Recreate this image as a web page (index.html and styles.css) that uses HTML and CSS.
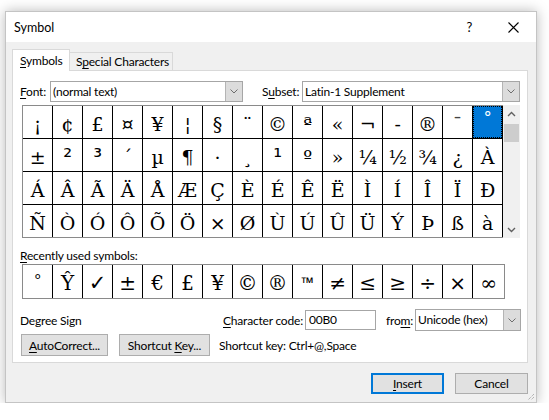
FILE: index.html
```html
<!DOCTYPE html>
<html>
<head>
<meta charset="utf-8">
<link rel="stylesheet" href="styles.css">
</head>
<body>
<div class="dialog">
  <div class="titlebar">
    <span class="title">Symbol</span>
    <span class="help">?</span>
    <svg class="close" width="11" height="11" viewBox="0 0 11 11"><path d="M0.5 0.5 L10.5 10.5 M10.5 0.5 L0.5 10.5" stroke="#000" stroke-width="1.1" fill="none"/></svg>
  </div>
  <div class="content">
    <div class="tabs">
      <div class="tab active"><u>S</u>ymbols</div>
      <div class="tab">S<u>p</u>ecial Characters</div>
    </div>
    <div class="panel">
      <div class="font-row">
        <span class="lbl font-lbl"><u>F</u>ont:</span>
        <div class="combo font-combo"><span class="combo-text">(normal text)</span><span class="combo-btn"><svg width="8" height="5" viewBox="0 0 8 5"><path d="M0.5 0.5 L4 4 L7.5 0.5" stroke="#6d6d6d" fill="none"/></svg></span></div>
        <span class="lbl subset-lbl">S<u>u</u>bset:</span>
        <div class="combo subset-combo"><span class="combo-text">Latin-1 Supplement</span><span class="combo-btn"><svg width="8" height="5" viewBox="0 0 8 5"><path d="M0.5 0.5 L4 4 L7.5 0.5" stroke="#6d6d6d" fill="none"/></svg></span></div>
      </div>
      <div class="charmap">
        <div class="chargrid">
          <span class="cell">¡</span><span class="cell">¢</span><span class="cell">£</span><span class="cell">¤</span><span class="cell">¥</span><span class="cell">¦</span><span class="cell">§</span><span class="cell">¨</span><span class="cell">©</span><span class="cell">ª</span><span class="cell">«</span><span class="cell">¬</span><span class="cell">-</span><span class="cell">®</span><span class="cell macron">¯</span><span class="cell sel">°</span>
          <span class="cell">±</span><span class="cell sup">²</span><span class="cell sup">³</span><span class="cell">´</span><span class="cell">µ</span><span class="cell">¶</span><span class="cell">·</span><span class="cell">¸</span><span class="cell sup">¹</span><span class="cell">º</span><span class="cell">»</span><span class="cell">¼</span><span class="cell">½</span><span class="cell">¾</span><span class="cell">¿</span><span class="cell">À</span>
          <span class="cell">Á</span><span class="cell">Â</span><span class="cell">Ã</span><span class="cell">Ä</span><span class="cell">Å</span><span class="cell">Æ</span><span class="cell">Ç</span><span class="cell">È</span><span class="cell">É</span><span class="cell">Ê</span><span class="cell">Ë</span><span class="cell">Ì</span><span class="cell">Í</span><span class="cell">Î</span><span class="cell">Ï</span><span class="cell">Ð</span>
          <span class="cell">Ñ</span><span class="cell">Ò</span><span class="cell">Ó</span><span class="cell">Ô</span><span class="cell">Õ</span><span class="cell">Ö</span><span class="cell">×</span><span class="cell">Ø</span><span class="cell">Ù</span><span class="cell">Ú</span><span class="cell">Û</span><span class="cell">Ü</span><span class="cell">Ý</span><span class="cell">Þ</span><span class="cell">ß</span><span class="cell">à</span>
        </div>
        <div class="scrollbar">
          <span class="sb-arrow"><svg width="9" height="6" viewBox="0 0 9 6"><path d="M1 5 L4.5 1.5 L8 5" stroke="#606060" stroke-width="1.4" fill="none"/></svg></span>
          <span class="sb-thumb"></span>
          <span class="sb-space"></span>
          <span class="sb-arrow"><svg width="9" height="6" viewBox="0 0 9 6"><path d="M1 1 L4.5 4.5 L8 1" stroke="#606060" stroke-width="1.4" fill="none"/></svg></span>
        </div>
      </div>
      <div class="recent-lbl"><u>R</u>ecently used symbols:</div>
      <div class="recent">
        <span class="rcell deg">°</span><span class="rcell">Ŷ</span><span class="rcell check">✓</span><span class="rcell">±</span><span class="rcell">€</span><span class="rcell">£</span><span class="rcell">¥</span><span class="rcell">©</span><span class="rcell">®</span><span class="rcell tm">™</span><span class="rcell">≠</span><span class="rcell">≤</span><span class="rcell">≥</span><span class="rcell">÷</span><span class="rcell sans">×</span><span class="rcell">∞</span>
      </div>
      <div class="code-row">
        <span class="char-name">Degree Sign</span>
        <span class="lbl code-lbl"><u>C</u>haracter code:</span>
        <div class="textbox">00B0</div>
        <span class="lbl from-lbl">fro<u>m</u>:</span>
        <div class="combo from-combo"><span class="combo-text">Unicode (hex)</span><span class="combo-btn"><svg width="8" height="5" viewBox="0 0 8 5"><path d="M0.5 0.5 L4 4 L7.5 0.5" stroke="#6d6d6d" fill="none"/></svg></span></div>
      </div>
      <div class="btn-row">
        <button class="btn autocorrect"><u>A</u>utoCorrect...</button>
        <button class="btn shortcut">Shortcut <u>K</u>ey...</button>
        <span class="shortcut-text">Shortcut key: Ctrl+@,Space</span>
      </div>
    </div>
    <div class="footer">
      <button class="btn default"><u>I</u>nsert</button>
      <button class="btn">Cancel</button>
    </div>
  </div>
  <svg class="grip" width="10" height="10" viewBox="0 0 10 10"><path d="M9 3 L3 9 M9 6 L6 9" stroke="#9a9a9a" stroke-width="1" stroke-dasharray="1 1" fill="none"/></svg>
</div>
</body>
</html>
```

FILE: styles.css
```css
html, body {
  margin: 0;
  background: #ffffff;
}
body {
  font-family: Lato, "Noto Sans", sans-serif;
  font-size: 12px;
  letter-spacing: -0.2px;
  color: #000;
}
u { text-decoration: underline; text-underline-offset: 2px; }

.dialog {
  position: relative;
  margin: 11px 0 0 5px;
  width: 532px;
  box-sizing: border-box;
  background: #f0f0f0;
  border: 1px solid #c4c4c4;
  box-shadow: 0 0 12px rgba(0, 0, 0, 0.28);
}

.titlebar {
  height: 30px;
  background: #fff;
  display: flex;
  align-items: center;
  padding-left: 8px;
}
.title { font-size: 12.5px; letter-spacing: 0; }
.help { margin-left: auto; font-size: 13px; margin-right: 36px; }
.close { margin-right: 17px; }

.content { padding: 7px 8px 8px 6px; }

.tabs {
  display: flex;
  align-items: flex-end;
  height: 22px;
  position: relative;
  z-index: 1;
  margin-bottom: -1px;
}
.tab {
  box-sizing: border-box;
  height: 18px;
  margin-bottom: 1px;
  width: 103px;
  padding-left: 6px;
  border: 1px solid #d9d9d9;
  border-left: none;
  border-bottom: none;
  background: #f0f0f0;
  line-height: 17px;
  white-space: nowrap;
}
.tab.active {
  height: 22px;
  margin-bottom: 0;
  width: 58px;
  padding-left: 7px;
  border-left: 1px solid #d9d9d9;
  background: #fff;
  line-height: 21px;
}

.panel {
  background: #fff;
  border: 1px solid #d9d9d9;
  height: 293px;
  box-sizing: border-box;
  padding: 10px 0 0 7px;
}

.lbl { white-space: nowrap; }

.font-row {
  display: flex;
  align-items: center;
  height: 21px;
}
.font-lbl { width: 30px; }
.subset-lbl { width: 40px; margin-left: 19px; }

.combo {
  height: 21px;
  box-sizing: border-box;
  border: 1px solid #a6a6a6;
  display: flex;
  background: #fff;
}
.combo-text { flex: 1; padding-left: 2px; line-height: 19px; white-space: nowrap; }
.combo-btn {
  width: 16px;
  background: #dcdcdc;
  border-left: 1px solid #b4b4b4;
  display: flex;
  align-items: center;
  justify-content: center;
}
.font-combo { width: 193px; }
.subset-combo { width: 218px; }

.charmap {
  display: flex;
  margin: 3px 0 0 2px;
}
.chargrid {
  display: grid;
  grid-template-columns: repeat(16, 29px);
  grid-auto-rows: 32px;
  gap: 1px;
  background: #000;
  border: 1px solid #8a8a8a;
  border-right: none;
  padding-right: 1px;
}
.cell {
  background: #fff;
  font-family: "DejaVu Serif", serif;
  font-size: 19px;
  text-align: center;
  line-height: 28px;
  padding-top: 4px;
  box-sizing: border-box;
  overflow: hidden;
}
.cell.sup { font-family: "DejaVu Sans", sans-serif; font-size: 22px; }
.cell.sel {
  background: #0078d7;
  color: #fff;
  outline: 1px dotted #000;
  outline-offset: -1px;
  font-family: "Noto Sans", sans-serif;
  font-size: 16px;
  line-height: 22px;
  padding-top: 0;
}
.cell.macron { color: #444; }

.scrollbar {
  width: 17px;
  background: #f0f0f0;
  display: flex;
  flex-direction: column;
  align-items: center;
}
.sb-arrow {
  height: 17px;
  width: 17px;
  display: flex;
  align-items: center;
  justify-content: center;
}
.sb-thumb {
  width: 15px;
  height: 18px;
  margin-top: 2px;
  background: #cdcdcd;
}
.sb-space { flex: 1; }

.recent-lbl {
  margin-top: 10px;
  line-height: 15px;
  height: 15px;
}
.recent {
  display: grid;
  grid-template-columns: repeat(15, 29px) 1fr;
  gap: 1px;
  background: #000;
  border: 1px solid #8a8a8a;
  width: 483px;
  height: 35px;
  margin: 1px 0 0 2px;
  box-sizing: border-box;
}
.rcell {
  background: #fff;
  font-family: "DejaVu Serif", serif;
  font-size: 20px;
  text-align: center;
  line-height: 28px;
  padding-top: 4px;
  box-sizing: border-box;
  overflow: hidden;
}
.rcell.deg { font-family: "Noto Sans", sans-serif; font-size: 15px; line-height: 20px; }
.rcell.tm { font-family: "Noto Sans", sans-serif; font-size: 16px; }
.rcell.sans { font-family: "DejaVu Sans", sans-serif; }
.rcell.check { font-family: "DejaVu Sans", sans-serif; font-size: 21px; }

.code-row {
  display: flex;
  align-items: center;
  height: 22px;
  margin-top: 10px;
}
.char-name { width: 203px; }
.code-lbl { width: 82px; }
.textbox {
  width: 71px;
  height: 20px;
  box-sizing: border-box;
  border: 1px solid #a6a6a6;
  background: #fff;
  padding-left: 3px;
  line-height: 18px;
}
.from-lbl { margin-left: 10px; width: 29px; }
.from-combo { width: 106px; height: 22px; }
.from-combo .combo-text { line-height: 20px; }

.btn-row {
  display: flex;
  align-items: center;
  margin-top: 3px;
  height: 22px;
}
.btn {
  height: 22px;
  box-sizing: border-box;
  background: #e1e1e1;
  border: 1px solid #adadad;
  font-family: inherit;
  font-size: 12px;
  letter-spacing: inherit;
  color: #000;
  padding: 0;
  margin: 0;
}
.autocorrect { width: 87px; margin-left: 1px; }
.shortcut { width: 91px; margin-left: 11px; }
.shortcut-text { margin-left: 9px; }

.footer {
  display: flex;
  justify-content: flex-end;
  gap: 11px;
  margin-top: 10px;
}
.footer .btn { width: 73px; height: 21px; }
.btn.default { border: 2px solid #0078d7; }

.grip {
  position: absolute;
  right: 1px;
  bottom: 1px;
}
```
